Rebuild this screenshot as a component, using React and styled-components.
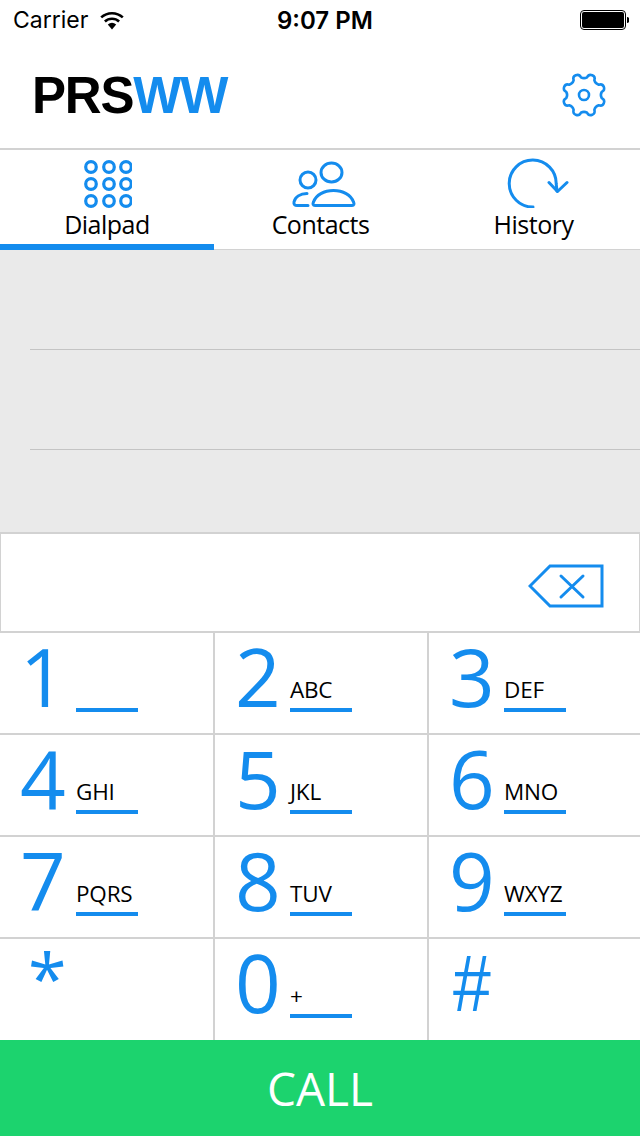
import React from 'react';
import styled, { createGlobalStyle } from 'styled-components';

const BLUE = '#148cee';
const LINE = '#d2d2d2';

const keys = [
    { digit: '1', letters: '' },
    { digit: '2', letters: 'ABC' },
    { digit: '3', letters: 'DEF' },
    { digit: '4', letters: 'GHI' },
    { digit: '5', letters: 'JKL' },
    { digit: '6', letters: 'MNO' },
    { digit: '7', letters: 'PQRS' },
    { digit: '8', letters: 'TUV' },
    { digit: '9', letters: 'WXYZ' },
    { symbol: '*' },
    { digit: '0', letters: '+' },
    { symbol: '#' },
];

const App = () => {
    return (
        <Screen>
            <GlobalStyle />
            <StatusBar>
                <Carrier>
                    Carrier
                    <WifiIcon />
                </Carrier>
                <Clock>9:07 PM</Clock>
                <BatteryIcon />
            </StatusBar>

            <Header>
                <Logo>PRS<span>WW</span></Logo>
                <GearIcon />
            </Header>

            <Tabs>
                <Tab $active>
                    <DialIcon />
                    <TabLabel>Dialpad</TabLabel>
                </Tab>
                <Tab>
                    <ContactsIcon />
                    <TabLabel>Contacts</TabLabel>
                </Tab>
                <Tab>
                    <HistoryIcon />
                    <TabLabel>History</TabLabel>
                </Tab>
            </Tabs>

            <Fields>
                <Field />
                <Field />
            </Fields>

            <NumberRow>
                <BackspaceIcon />
            </NumberRow>

            <Keypad>
                {keys.map((key) => (
                    <Key key={key.digit || key.symbol}>
                        {key.symbol === '*' && <Star>*</Star>}
                        {key.symbol === '#' && <Hash>#</Hash>}
                        {key.digit && <Digit>{key.digit}</Digit>}
                        {key.digit && <Letters>{key.letters}</Letters>}
                    </Key>
                ))}
            </Keypad>

            <CallButton>CALL</CallButton>
        </Screen>
    );
};

/* ICONS */
const WifiIcon = () => (
    <WifiSvg width="26" height="19" viewBox="0 0 26 19">
        <path d="M13 18.5 L8.8 13.6 A6.6 6.6 0 0 1 17.2 13.6 Z" fill="#000" />
        <path d="M5.9 10.5 A10.4 10.4 0 0 1 20.1 10.5" fill="none" stroke="#000" strokeWidth="2.6" />
        <path d="M2.2 6.4 A16 16 0 0 1 23.8 6.4" fill="none" stroke="#000" strokeWidth="2.6" />
    </WifiSvg>
);

const BatteryIcon = () => (
    <svg width="49" height="20" viewBox="0 0 49 20">
        <rect x="0.5" y="0.5" width="45" height="19" rx="3.5" fill="none" stroke="#000" />
        <rect x="2" y="2" width="42" height="16" rx="2" fill="#000" />
        <path d="M47 7 a2.5 3 0 0 1 0 6 Z" fill="#000" />
    </svg>
);

const GearIcon = () => {
    // contorno a 8 denti, con la tacca in alto al centro
    const cx = 24;
    const cy = 24;
    const teeth = 8;
    const step = (2 * Math.PI) / teeth;
    const pt = (r, t) => `${(cx + r * Math.cos(t)).toFixed(2)} ${(cy + r * Math.sin(t)).toFixed(2)}`;
    let d = '';
    for (let i = 0; i < teeth; i++) {
        const a = i * step - Math.PI / 2 + step / 2;
        d += `${i === 0 ? 'M' : 'L'}${pt(18, a - step * 0.28)} `;
        d += `C${pt(23, a - step * 0.2)} ${pt(23, a + step * 0.2)} ${pt(18, a + step * 0.28)} `;
        d += `Q${pt(16, a + step * 0.5)} ${pt(18, a + step * 0.72)} `;
    }
    return (
        <svg width="48" height="48" viewBox="0 0 48 48" fill="none" stroke={BLUE} strokeWidth="2.6" strokeLinejoin="round">
            <path d={`${d}Z`} />
            <circle cx="24" cy="24" r="5" />
        </svg>
    );
};

const DialIcon = () => (
    <TabSvg width="50" height="50" viewBox="0 0 50 50" fill="none" stroke={BLUE} strokeWidth="3.2">
        {[9, 26, 43].map((y) => [9, 27, 44].map((x) => (
            <circle key={`${x}-${y}`} cx={x} cy={y} r="5.3" />
        )))}
    </TabSvg>
);

const ContactsIcon = () => (
    <TabSvg width="70" height="50" viewBox="0 0 70 50" fill="none" stroke={BLUE} strokeWidth="3" strokeLinecap="round">
        <ellipse cx="45.5" cy="14.5" rx="10.5" ry="9.5" />
        <circle cx="22" cy="22" r="8" />
        <path d="M29 47.5 H66 C68 47.5 68.5 46 67.5 44 C65 37 57 32.5 47.5 32.5 C38 32.5 30 37 27.5 44 C26.5 46 27 47.5 29 47.5 Z" />
        <path d="M21 35.5 C14 35.5 9 39 8 44 C7.5 46.5 9 47.5 11 47.5 H22" />
    </TabSvg>
);

const HistoryIcon = () => (
    <TabSvg width="70" height="50" viewBox="0 0 70 50" fill="none" stroke={BLUE} strokeWidth="3" strokeLinecap="round" strokeLinejoin="round">
        <path d="M34 49 A23.5 23.5 0 1 1 57.2 26 L58 33" />
        <path d="M50 24.5 L58.5 33.5 L68 24.5" />
    </TabSvg>
);

const BackspaceIcon = () => (
    <svg width="76" height="44" viewBox="0 0 76 44" fill="none" stroke={BLUE} strokeWidth="3" strokeLinecap="round">
        <path d="M74 2 H22 L2 22 L22 42 H74 Z" strokeLinejoin="miter" />
        <path d="M33 12 L55 33 M55 12 L33 33" />
    </svg>
);

/* STILE COMPONENTI */
const GlobalStyle = createGlobalStyle`
    html, body {
        margin: 0;
        padding: 0;
        background: #fff;
    }
`;

const Screen = styled.div`
    width: 640px;
    height: 1136px;
    display: flex;
    flex-direction: column;
    overflow: hidden;
    background: #fff;
    font-family: "Open Sans", "Noto Sans", sans-serif;
`;

const StatusBar = styled.div`
    height: 40px;
    padding: 0 11px 0 13px;
    display: flex;
    align-items: center;
    justify-content: space-between;
    position: relative;
    font-family: Inter, Roboto, sans-serif;
    font-size: 23px;
    color: #000;
`;

const Carrier = styled.div`
    display: flex;
    align-items: center;
`;

const WifiSvg = styled.svg`
    margin-left: 11px;
`;

const Clock = styled.div`
    position: absolute;
    left: 277px;
    top: 6px;
    font-size: 24px;
    font-weight: 600;
`;

const Header = styled.div`
    height: 110px;
    padding: 2px 32px 0 32px;
    display: flex;
    align-items: center;
    justify-content: space-between;
    border-bottom: 2px solid ${LINE};
    box-sizing: border-box;
`;

const Logo = styled.div`
    font-family: "Liberation Sans", Arial, sans-serif;
    font-weight: 700;
    font-size: 51px;
    letter-spacing: -1.2px;
    color: #000;

    span {
        color: ${BLUE};
    }
`;

const Tabs = styled.div`
    height: 100px;
    display: grid;
    grid-template-columns: 214px 213px 213px;
    box-sizing: border-box;
    border-bottom: 1px solid ${LINE};
`;

const Tab = styled.div`
    position: relative;
    height: 99px;
    display: flex;
    flex-direction: column;
    align-items: center;
    padding-top: 8px;
    box-sizing: border-box;

    &::after {
        content: '';
        display: ${(props) => (props.$active ? 'block' : 'none')};
        position: absolute;
        left: 0;
        right: 0;
        bottom: -1px;
        height: 6px;
        background: ${BLUE};
    }
`;

const TabSvg = styled.svg`
    flex: none;
`;

const TabLabel = styled.div`
    font-size: 25px;
    letter-spacing: -0.5px;
    line-height: 28px;
    color: #000;
    margin-top: 2px;
`;

const Fields = styled.div`
    height: 282px;
    background: #eaeaea;
    padding-left: 30px;
    padding-top: 99px;
    box-sizing: border-box;
    display: flex;
    flex-direction: column;
    gap: 99px;
`;

const Field = styled.div`
    height: 1px;
    background: #c4c4c4;
`;

const NumberRow = styled.div`
    height: 99px;
    box-sizing: border-box;
    border-top: 2px solid ${LINE};
    border-left: 1px solid ${LINE};
    border-right: 1px solid ${LINE};
    display: flex;
    align-items: center;
    justify-content: flex-end;
    padding: 7px 35px 0 0;
`;

const Keypad = styled.div`
    display: grid;
    grid-template-columns: 213px 214px 213px;
    grid-template-rows: 102px 102px 102px 103px;
`;

const Digit = styled.div`
    width: 55px;
    font-size: 80px;
    line-height: 86px;
    color: ${BLUE};
`;

const Star = styled.div`
    font-size: 70px;
    line-height: 76px;
    padding-left: 8px;
    color: ${BLUE};
`;

const Hash = styled.div`
    font-family: "Liberation Sans", Arial, sans-serif;
    font-size: 80px;
    line-height: 90px;
    margin-left: 4px;
    color: ${BLUE};
    transform: scaleX(0.85);
    transform-origin: left center;
`;

const Letters = styled.div`
    width: 62px;
    height: 36px;
    margin-top: 39px;
    font-size: 22.5px;
    letter-spacing: -0.2px;
    line-height: 36px;
    color: #000;
    border-bottom: 4px solid ${BLUE};
`;

const Key = styled.div`
    box-sizing: border-box;
    display: flex;
    align-items: flex-start;
    padding-left: 20px;
    border-top: 2px solid ${LINE};
    border-left: 2px solid ${LINE};

    &:nth-child(3n + 1) {
        border-left: none;
    }

    &:nth-child(3n + 1) ${Digit} {
        width: 56px;
    }
`;

const CallButton = styled.div`
    height: 96px;
    background: #1cd36e;
    color: #fff;
    font-size: 46px;
    display: flex;
    align-items: center;
    justify-content: center;
`;

export default App;
